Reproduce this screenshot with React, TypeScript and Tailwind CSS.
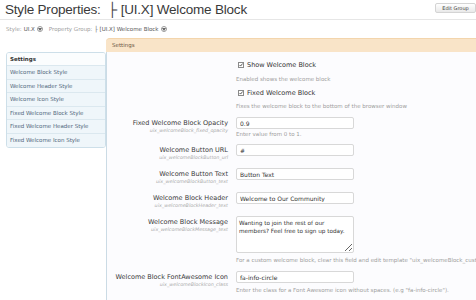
import { useState } from "react";

const sidebarItems = [
    "Welcome Block Style",
    "Welcome Header Style",
    "Welcome Icon Style",
    "Fixed Welcome Block Style",
    "Fixed Welcome Header Style",
    "Fixed Welcome Icon Style",
];

function DropCircle() {
    return (
        <span className="inline-flex items-center justify-center w-[6px] h-[6px] rounded-full border border-[#9a9a9a] bg-white ml-[2px] align-middle">
            <svg width="4" height="3" viewBox="0 0 4 3">
                <path d="M0 0 L4 0 L2 3 Z" fill="#666" />
            </svg>
        </span>
    );
}

function CheckRow({ label, checked, onToggle }: { label: string; checked: boolean; onToggle: () => void }) {
    return (
        <div className="flex items-center h-[10px]" onClick={onToggle}>
            <span className="ml-[2px] w-[6px] h-[6px] border border-[#8a8a8a] bg-white flex items-center justify-center">
                {checked && (
                    <svg width="6" height="6" viewBox="0 0 6 6">
                        <path d="M0.8 3 L2.4 4.6 L5.4 0.8" stroke="#333" strokeWidth="1.2" fill="none" />
                    </svg>
                )}
            </span>
            <span className="ml-[3px] text-[6.5px] leading-[10px] text-[#333]">{label}</span>
        </div>
    );
}

function Label({ title, sub }: { title: string; sub: string }) {
    return (
        <div className="w-[121px] shrink-0 text-right pt-[1px]">
            <div className="text-[6.5px] leading-[10px] text-[#3a3a3a] whitespace-nowrap">{title}</div>
            <div className="text-[4.8px] leading-[6px] italic text-[#aaa] whitespace-nowrap">{sub}</div>
        </div>
    );
}

function TextField({ value }: { value: string }) {
    return (
        <input
            defaultValue={value}
            className="block w-[118px] h-[12px] border border-[#d8d8d8] rounded-[2px] bg-white px-[3px] text-[6px] text-[#333] outline-none"
        />
    );
}

function Desc({ children }: { children: React.ReactNode }) {
    return <div className="text-[5.5px] leading-[7px] text-[#9d9d9d] whitespace-nowrap">{children}</div>;
}

export default function App() {
    const [showBlock, setShowBlock] = useState(true);
    const [fixedBlock, setFixedBlock] = useState(true);

    return (
        <div className="w-[476px] h-[300px] overflow-hidden bg-white font-['DejaVu_Sans',sans-serif]">
            {/* header */}
            <div className="flex h-[20px] border-b border-[#e6e6e6]">
                <h1 className="pl-[5px] text-[13.5px] leading-[19px] tracking-[-0.2px] text-[#3a3a3a] font-['Liberation_Sans',sans-serif] whitespace-nowrap">
                    Style Properties:&nbsp; ├ [UI.X] Welcome Block
                </h1>
                <div className="ml-auto mr-[-41px] flex gap-[3px] pt-[3px] shrink-0">
                    <button className="w-[41px] h-[10px] rounded-[2px] border border-[#d4d4d4] bg-gradient-to-b from-white to-[#e9e9e9] text-[5px] leading-[8px] text-[#444]">
                        Edit Group
                    </button>
                    <button className="w-[38px] h-[10px] rounded-[2px] border border-[#d4d4d4] bg-gradient-to-b from-white to-[#e9e9e9]" />
                </div>
            </div>

            {/* style / property group */}
            <div className="flex items-center h-[18px] pl-[6px] text-[5.5px] whitespace-nowrap">
                <span className="text-[#a0a0a0]">Style:</span>
                <span className="ml-[2px] text-[#555]">UI.X</span>
                <DropCircle />
                <span className="ml-[6px] text-[#a0a0a0]">Property Group:</span>
                <span className="ml-[2px] text-[#555]">├ [UI.X] Welcome Block</span>
                <DropCircle />
            </div>

            <div className="flex">
                {/* sidebar */}
                <div className="w-[106px] shrink-0 pt-[14px] pl-[6px]">
                    <div className="border border-[#cddfe9] rounded-[3px] overflow-hidden text-[5.5px]">
                        <div className="h-[13px] leading-[13px] pl-[3px] font-bold text-[#333] bg-[#fbfdfe] border-b border-[#dbe8ef]">
                            Settings
                        </div>
                        {sidebarItems.map((item, i) => (
                            <div
                                key={item}
                                className={
                                    "h-[13.5px] leading-[13.5px] pl-[3px] text-[#4f677c] bg-[#eff6fa] " +
                                    (i < sidebarItems.length - 1 ? "border-b border-[#dbe8ef]" : "")
                                }
                            >
                                {item}
                            </div>
                        ))}
                    </div>
                </div>

                {/* main panel */}
                <div className="flex-1 flex flex-col">
                    <div className="h-[14px] rounded-tl-[4px] bg-[#f9e4c8] border-t border-[#f3d5ac] pl-[6px] text-[5.5px] leading-[13px] text-[#6a5644]">
                        Settings
                    </div>
                    <div className="border-l border-[#cbdbe5] bg-[#fcfcfe] h-[260px]">
                        <div className="pl-[129px] pt-[8px]">
                            <CheckRow label="Show Welcome Block" checked={showBlock} onToggle={() => setShowBlock(!showBlock)} />
                            <div className="mt-[6px]">
                                <Desc>Enabled shows the welcome block</Desc>
                            </div>
                            <div className="mt-[5px]">
                                <CheckRow label="Fixed Welcome Block" checked={fixedBlock} onToggle={() => setFixedBlock(!fixedBlock)} />
                            </div>
                            <div className="mt-[5px]">
                                <Desc>Fixes the welcome block to the bottom of the browser window</Desc>
                            </div>
                        </div>

                        <div className="flex gap-[8px] mt-[7px]">
                            <Label title="Fixed Welcome Block Opacity" sub="uix_welcomeBlock_fixed_opacity" />
                            <div>
                                <TextField value="0.9" />
                                <div className="mt-[2px]">
                                    <Desc>Enter value from 0 to 1.</Desc>
                                </div>
                            </div>
                        </div>

                        <div className="flex gap-[8px] mt-[6px]">
                            <Label title="Welcome Button URL" sub="uix_welcomeBlockButton_url" />
                            <TextField value="#" />
                        </div>

                        <div className="flex gap-[8px] mt-[7px]">
                            <Label title="Welcome Button Text" sub="uix_welcomeBlockButton_text" />
                            <TextField value="Button Text" />
                        </div>

                        <div className="flex gap-[8px] mt-[7px]">
                            <Label title="Welcome Block Header" sub="uix_welcomeBlockHeader_text" />
                            <TextField value="Welcome to Our Community" />
                        </div>

                        <div className="flex gap-[8px] mt-[7px]">
                            <Label title="Welcome Block Message" sub="uix_welcomeBlockMessage_text" />
                            <div>
                                <textarea
                                    defaultValue="Wanting to join the rest of our members? Feel free to sign up today."
                                    className="block w-[118px] h-[37px] border border-[#d8d8d8] rounded-[2px] bg-white px-[2px] py-[2px] text-[5.7px] leading-[8px] text-[#333] outline-none resize"
                                />
                                <div className="mt-[4px]">
                                    <Desc>
                                        For a custom welcome block, clear this field and edit template "uix_welcomeBlock_custom".
                                    </Desc>
                                </div>
                            </div>
                        </div>

                        <div className="flex gap-[8px] mt-[7px]">
                            <Label title="Welcome Block FontAwesome Icon" sub="uix_welcomeBlockIcon_class" />
                            <div>
                                <TextField value="fa-info-circle" />
                                <div className="mt-[4px]">
                                    <Desc>Enter the class for a Font Awesome icon without spaces. (e.g "fa-info-circle").</Desc>
                                </div>
                            </div>
                        </div>
                    </div>
                </div>
            </div>
        </div>
    );
}
